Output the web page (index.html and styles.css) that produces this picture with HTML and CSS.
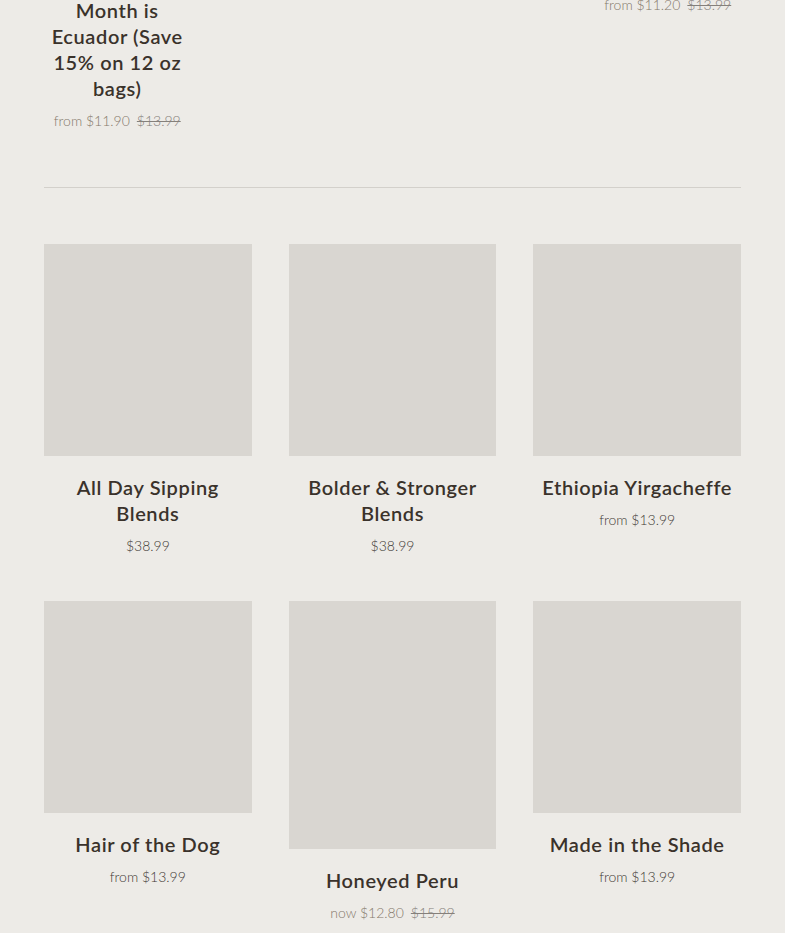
FILE: index.html
```html
<!DOCTYPE html>
<html lang="en">
<head>
<meta charset="utf-8">
<title>Coffee</title>
<link rel="stylesheet" href="styles.css">
</head>
<body>
<main class="page">
  <section class="grid grid-4 featured">
    <div class="card">
      <div class="img img-a"></div>
      <h3 class="title">Coffee of the Month is Ecuador (Save 15% on 12 oz bags)</h3>
      <p class="price"><span class="sale">from $11.90</span><s class="was">$13.99</s></p>
    </div>
    <div class="card"></div>
    <div class="card"></div>
    <div class="card">
      <div class="img img-b"></div>
      <h3 class="title">Decaf Swiss Water</h3>
      <p class="price"><span class="sale">from $11.20</span><s class="was">$13.99</s></p>
    </div>
  </section>

  <hr class="divider">

  <section class="grid grid-3 products">
    <div class="card">
      <div class="img img-sq"></div>
      <h3 class="title">All Day Sipping Blends</h3>
      <p class="price"><span class="reg">$38.99</span></p>
    </div>
    <div class="card">
      <div class="img img-sq"></div>
      <h3 class="title">Bolder &amp; Stronger Blends</h3>
      <p class="price"><span class="reg">$38.99</span></p>
    </div>
    <div class="card">
      <div class="img img-sq"></div>
      <h3 class="title">Ethiopia Yirgacheffe</h3>
      <p class="price"><span class="reg">from $13.99</span></p>
    </div>
    <div class="card">
      <div class="img img-sq"></div>
      <h3 class="title">Hair of the Dog</h3>
      <p class="price"><span class="reg">from $13.99</span></p>
    </div>
    <div class="card">
      <div class="img img-tall"></div>
      <h3 class="title">Honeyed Peru</h3>
      <p class="price"><span class="sale">now $12.80</span><s class="was">$15.99</s></p>
    </div>
    <div class="card">
      <div class="img img-sq"></div>
      <h3 class="title">Made in the Shade</h3>
      <p class="price"><span class="reg">from $13.99</span></p>
    </div>
  </section>
</main>
</body>
</html>
```

FILE: styles.css
```css
* { box-sizing: border-box; }

html, body {
  margin: 0;
  padding: 0;
  background: #edebe7;
}

body {
  font-family: Lato, "Open Sans", sans-serif;
  color: #3a322b;
  overflow: hidden;
}

.page {
  padding: 0 44px;
}

.grid {
  display: grid;
  column-gap: 37px;
  align-items: start;
}

.grid-4 {
  grid-template-columns: repeat(4, 1fr);
}

.grid-3 {
  grid-template-columns: repeat(3, 1fr);
  row-gap: 45px;
}

.featured {
  margin-top: -259px;
}

.card {
  display: flex;
  flex-direction: column;
  align-items: stretch;
  text-align: center;
}

.img {
  background: #d9d6d1;
  width: 100%;
}

.img-a { height: 212px; }
.img-b { height: 174px; }
.img-sq { height: 212px; }
.img-tall { height: 248px; }

.title {
  margin: 18px 0 0;
  font-size: 20px;
  line-height: 26px;
  font-weight: 600;
  letter-spacing: 0.6px;
  color: #3a322b;
}

.price {
  margin: 10px 0 0;
  font-size: 14px;
  line-height: 20px;
  font-weight: 300;
  display: flex;
  justify-content: center;
  gap: 7px;
}

.reg { color: #3f3a35; }
.sale { color: #85796b; }
.was { color: #85807b; }

.divider {
  border: 0;
  border-top: 1px solid #d3d0cb;
  margin: 56px 0 56px;
  height: 0;
}
```
